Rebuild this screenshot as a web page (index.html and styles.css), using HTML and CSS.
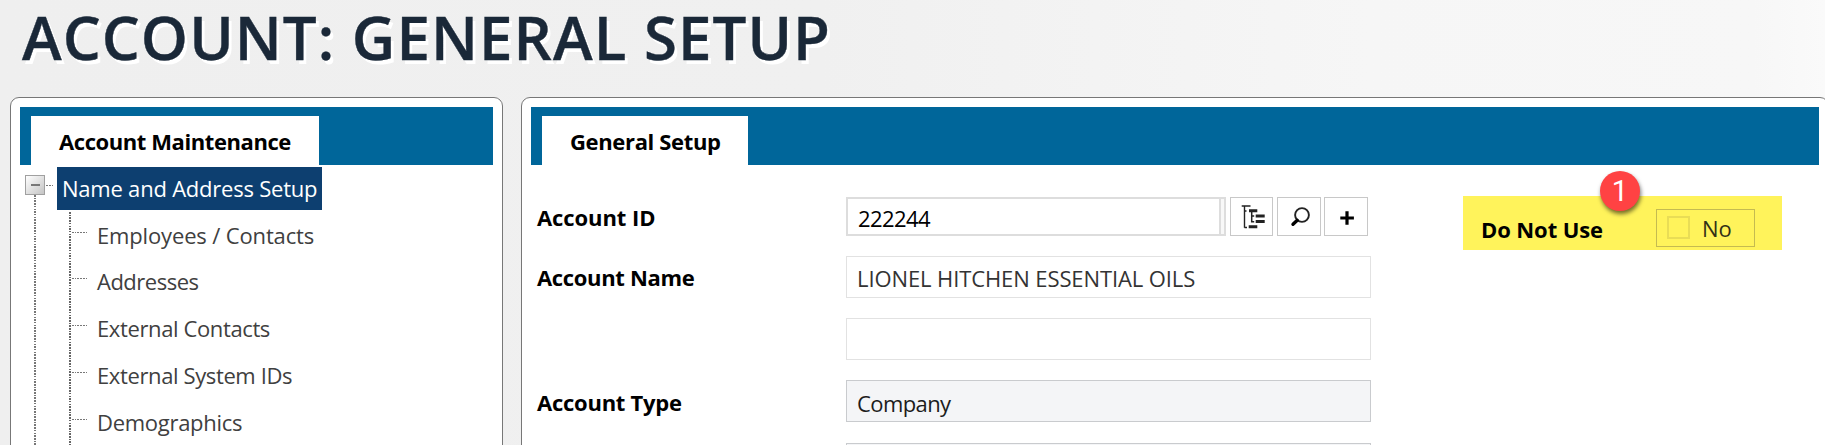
FILE: index.html
```html
<!DOCTYPE html>
<html lang="en">
<head>
<meta charset="utf-8">
<title>Account: General Setup</title>
<link rel="stylesheet" href="styles.css">
</head>
<body>
<h1 class="title">ACCOUNT: GENERAL SETUP</h1>
<main class="panels">
  <section class="panel panel-nav">
    <header class="tabbar"><div class="tab tab-nav">Account Maintenance</div></header>
    <div class="tree">
      <div class="root">
        <span class="toggle"></span><span class="link"></span>
        <a class="selected">Name and Address Setup</a>
      </div>
      <div class="children">
        <ul class="items">
          <li class="item item-first">Employees / Contacts</li>
          <li class="item tight-4">Addresses</li>
          <li class="item tight-3">External Contacts</li>
          <li class="item tight-3">External System IDs</li>
          <li class="item tight-2">Demographics</li>
        </ul>
      </div>
    </div>
  </section>
  <section class="panel panel-main">
    <header class="tabbar"><div class="tab tab-main">General Setup</div></header>
    <div class="content">
      <div class="form">
        <div class="row row-id">
          <label class="label label-id">Account ID</label>
          <div class="combo"><span class="value-id">222244</span><span class="handle"></span></div>
          <button class="btn btn-tree"><svg width="43" height="39" viewBox="0 0 43 39"><path d="M11.700 9h8.800M14.500 9v21.700M14.500 30.500h2.500M14.500 14h2" fill="none" stroke="#222" stroke-width="1.400"/><path d="M19 13.800h8.300M25.700 19h9M25.700 24.500h9M18.700 29.800h8.600" stroke="#222" stroke-width="3"/><path d="M21.700 14v11.400M21.700 19h2.500M21.700 24.800h2.500" fill="none" stroke="#222" stroke-width="1.500"/></svg></button>
          <button class="btn btn-find"><svg width="44" height="39" viewBox="0 0 44 39"><circle cx="25" cy="18" r="6.900" fill="none" stroke="#222" stroke-width="1.900"/><path d="M20.300 23.300l-4.300 4" stroke="#000" stroke-width="3.400" stroke-linecap="round"/></svg></button>
          <button class="btn btn-add"><svg width="44" height="39" viewBox="0 0 44 39"><path d="M16.300 21h13.600M23 14.200v13.600" stroke="#000" stroke-width="3.200"/></svg></button>
        </div>
        <div class="row"><label class="label label-name">Account Name</label><div class="field value-name">LIONEL HITCHEN ESSENTIAL OILS</div></div>
        <div class="row"><label class="label"></label><div class="field"></div></div>
        <div class="row"><label class="label label-type">Account Type</label><div class="field filled value-type">Company</div></div>
        <div class="row row-next"><label class="label"></label><div class="field filled"></div></div>
      </div>
      <div class="flag">
        <label class="flag-label">Do Not Use</label>
        <div class="check"><span class="box"></span><span class="check-text">No</span></div>
        <span class="badge">1</span>
      </div>
    </div>
  </section>
</main>
</body>
</html>
```
FILE: styles.css
```css
* { box-sizing: border-box; }
html { overflow: hidden; }
body {
  margin: 0;
  height: 445px;
  overflow: hidden;
  background: linear-gradient(90deg, #efefef 0, #f0f0f0 45%, #f6f6f6 75%, #f7f7f7 96%, #fafafa 100%);
  font: 22px "Open Sans", "Noto Sans", sans-serif;
  color: #000;
}
.title {
  margin: 0;
  padding: 1px 0 0 22px;
  height: 97px;
  font-size: 60px;
  font-weight: 600;
  line-height: 72px;
  letter-spacing: 1.05px;
  white-space: nowrap;
  color: #1a2838;
  -webkit-text-stroke: .4px #1a2838;
  text-shadow: 3px 4px 0 #fff;
}
.panels { display: flex; gap: 18px; height: 348px; overflow: hidden; padding-left: 10px; }
.panel {
  flex: none;
  height: 400px;
  padding: 9px;
  border: 1px solid #777;
  border-radius: 9px;
  background: #fff;
}
.panel-nav { width: 493px; }
.panel-main { width: 1308px; }
.tabbar { height: 58px; padding: 9px 0 0 11px; background: #00669a; }
.tab {
  height: 49px;
  padding: 1px 0 0 28px;
  line-height: 49px;
  font-weight: 700;
  white-space: nowrap;
  background: #fff;
}
.tab-nav { width: 288px; letter-spacing: -.42px; }
.tab-main { width: 206px; letter-spacing: -.35px; padding-left: 28px; }

.tree { padding: 2px 0 0 5px; }
.root { display: flex; height: 43px; }
.toggle {
  width: 20px;
  height: 20px;
  margin-top: 8px;
  border: 1px solid #a0a0a0;
  background:
    linear-gradient(#777, #777) center / 9px 2px no-repeat,
    linear-gradient(135deg, #fff, #c4c4c4);
}
.link {
  width: 8px;
  height: 1px;
  margin: 18px 4px 0 0;
  background: repeating-linear-gradient(90deg, transparent 0 1px, #777 1px 3px);
}
.selected {
  width: 265px;
  padding-left: 5px;
  line-height: 43px;
  letter-spacing: -.22px;
  white-space: nowrap;
  color: #fff;
  background: #0d3f70;
}
.children {
  margin: -15px 0 0 9px;
  padding: 17px 0 0 35px;
  height: 260px;
  background: repeating-linear-gradient(#777 0 1.500px, #fff 1.500px 2.700px) 0 0 / 2px 100% no-repeat;
}
.items {
  margin: 0;
  padding: 0;
  list-style: none;
  background: repeating-linear-gradient(#666 0 1.500px, #fff 1.500px 2.700px) 0 0 / 2px 100% no-repeat;
}
.item {
  height: 47px;
  padding-left: 28px;
  line-height: 47px;
  letter-spacing: -.15px;
  color: #404040;
  background: repeating-linear-gradient(90deg, #777 0 1.700px, #fff 1.700px 2.700px) 3px 20px / 16px 1px no-repeat;
}
.item-first { height: 46px; }
.tight-2 { letter-spacing: -.28px; }
.tight-3 { letter-spacing: -.38px; }
.tight-4 { letter-spacing: -.5px; }

.content { display: flex; align-items: flex-start; }
.form { flex: none; padding: 32px 0 0 6px; width: 846px; }
.row { display: flex; height: 42px; margin-bottom: 20px; }
.row-id { height: 39px; }
.row-next { margin-top: 21px; }
.label { width: 309px; line-height: 43px; font-weight: 700; }
.label-id { letter-spacing: -.08px; line-height: 41px; }
.label-name { letter-spacing: -.34px; }
.label-type { letter-spacing: -.25px; line-height: 45px; }
.field { width: 525px; border: 1px solid #e2e2e2; padding-left: 10px; line-height: 43px; }
.field.filled { border-color: #c9cbce; background: #f4f5f7; color: #1c1c1c; line-height: 45px; }
.value-id { letter-spacing: -.6px; }
.value-name { letter-spacing: -.1px; color: #333; }
.value-type { letter-spacing: -.6px; }
.combo {
  display: flex;
  justify-content: space-between;
  width: 380px;
  margin-right: 4px;
  padding-left: 10px;
  border: 2px solid #ddd;
  line-height: 39px;
}
.handle { width: 5px; border-left: 2px solid #ddd; background: #f8f8f8; }
.btn {
  display: flex;
  align-items: center;
  justify-content: center;
  height: 39px;
  width: 44px;
  padding: 0;
  border: 1px solid #c8c8c8;
  background: #fff;
}
.btn svg { flex: none; }
.btn-tree { width: 43px; margin-right: 4px; }
.btn-find { margin-right: 3px; }

.flag {
  position: relative;
  display: flex;
  flex: none;
  width: 319px;
  height: 54px;
  margin: 31px 0 0 86px;
  padding: 13px 0 0 18px;
  background: #fff35b;
}
.flag-label { width: 175px; line-height: 40px; font-weight: 700; letter-spacing: -.1px; }
.check { display: flex; width: 99px; height: 38px; padding: 6px 0 0 10px; border: 1px solid #c5bb50; }
.box { width: 23px; height: 23px; border: 2px solid #e9dd55; }
.check-text { margin: -6px 0 0 12px; line-height: 37px; color: #333016; }
.badge {
  position: absolute;
  left: 137px;
  top: -25px;
  width: 40px;
  height: 40px;
  border-radius: 50%;
  background: #ff4243;
  box-shadow: 1px 3px 4px rgba(0, 0, 0, .55);
  color: #fff;
  font: 29px/41px Roboto, "Liberation Sans", sans-serif;
  text-align: center;
}
```
